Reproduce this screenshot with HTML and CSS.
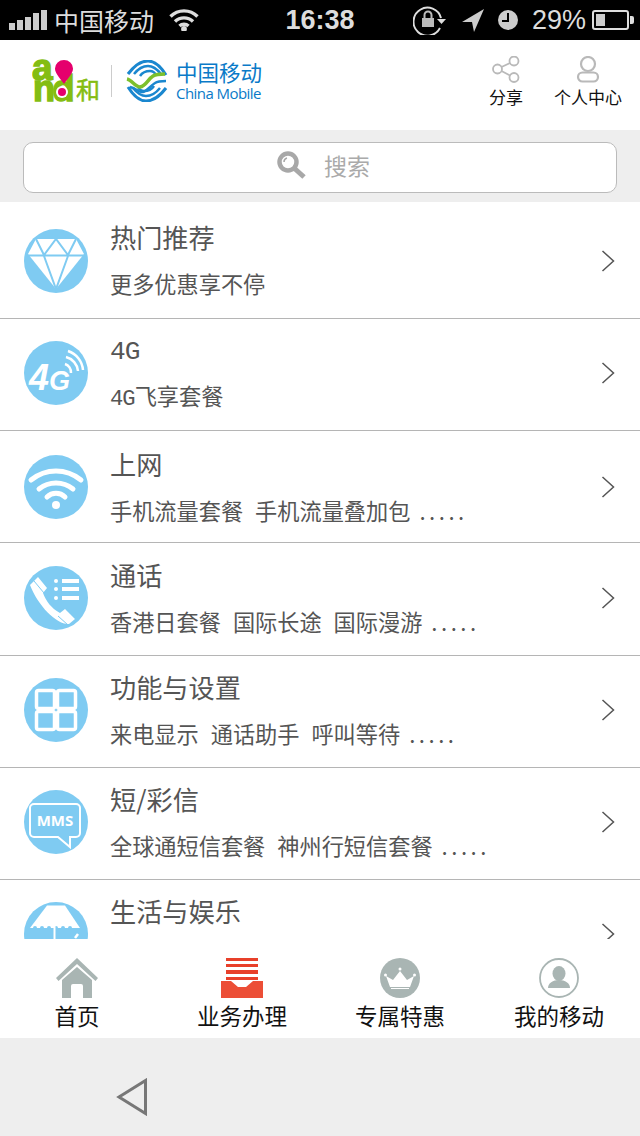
FILE: index.html
```html
<!DOCTYPE html>
<html lang="zh-CN">
<head>
    <meta charset="UTF-8">
    <meta name="viewport" content="width=device-width, initial-scale=1.0">
    <title>中国移动</title>
    <link rel="stylesheet" href="styles.css">
</head>
<body>
    <div class="phone">
        <!-- status bar -->
        <div class="status">
            <div class="status-left">
                <svg class="signal" width="38" height="20" viewBox="0 0 38 20">
                    <rect x="0" y="13" width="6" height="7"/>
                    <rect x="8" y="10" width="6" height="10"/>
                    <rect x="16" y="7" width="6" height="13"/>
                    <rect x="24" y="3" width="6" height="17"/>
                    <rect x="32" y="0" width="6" height="20"/>
                </svg>
                <span class="carrier">中国移动</span>
                <svg width="30" height="22" viewBox="0 0 30 22" fill="none" stroke="#ddd" stroke-width="3.4">
                    <path d="M1.500 7.500a19 19 0 0 1 27 0"/>
                    <path d="M6 12.500a13 13 0 0 1 18 0"/>
                    <path d="M10.500 17a6.500 6.500 0 0 1 9 0"/>
                    <circle cx="15" cy="20" r="1.200" fill="#ddd"/>
                </svg>
            </div>
            <div class="time">16:38</div>
            <div class="status-right">
                <svg width="34" height="30" viewBox="0 0 34 30" fill="none">
                    <path d="M27 23a14 14 0 1 1 1-10" stroke="#ddd" stroke-width="2"/>
                    <path d="M24 14h9l-4.500 5z" fill="#ddd"/>
                    <rect x="9" y="13" width="12" height="9" fill="#bbb"/>
                    <path d="M11.500 13v-3a3.500 3.500 0 0 1 7 0v3" stroke="#bbb" stroke-width="2"/>
                </svg>
                <svg class="arrow" width="22" height="23" viewBox="0 0 22 23"><path d="M22 0L0 13l10 0 2 10z" fill="#ccc"/></svg>
                <svg class="clock" width="20" height="20" viewBox="0 0 20 20">
                    <circle cx="10" cy="10" r="10" fill="#ccc"/>
                    <path d="M10 3v8H4" fill="none" stroke="#000" stroke-width="2"/>
                </svg>
                <span class="battery-text">29%</span>
                <svg width="42" height="20" viewBox="0 0 42 20">
                    <rect x="1" y="1" width="35" height="18" rx="2" fill="none" stroke="#ddd" stroke-width="2"/>
                    <rect x="4" y="4" width="9" height="12" fill="#ccc"/>
                    <path d="M38 6h2a2 2 0 0 1 2 2v4a2 2 0 0 1-2 2h-2z" fill="#ddd"/>
                </svg>
            </div>
        </div>

        <!-- top header with logos -->
        <header class="header">
            <div class="logos">
                <svg class="logo-and" width="68" height="70" viewBox="0 -14 68 70">
                    <g class="and-letters">
                        <text x="0" y="19.500" font-size="37">a</text>
                        <text x="1" y="41" font-size="36" letter-spacing="-2.500">nd</text>
                        <text x="44" y="39" font-size="24" class="and-he">和</text>
                    </g>
                    <path d="M32 24C27 17 23 13 23 8.500a9 8.500 0 0 1 18 0C41 13 37 17 32 24z" fill="#e5006d"/>
                    <circle cx="30" cy="32" r="6" fill="#fff"/>
                    <circle cx="30" cy="32" r="4" fill="#e5006d"/>
                </svg>
                <div class="logo-line"></div>
                <svg width="42" height="42" viewBox="0 0 42 42" fill="none">
                    <g stroke="#1a87cf">
                        <path d="M2 14C8 6 15 1 22 1 29 1 35 7 40 15" stroke-width="3"/>
                        <path d="M8 14C12 9 17 6 22 6 27 6 31 9 35 14" stroke-width="2.500"/>
                        <path d="M14 16C16 13 20 11 24 11 27 11 29 13 30 15" stroke-width="2.500"/>
                        <g transform="rotate(180 21 21)">
                            <path d="M2 14C8 6 15 1 22 1 29 1 35 7 40 15" stroke-width="3"/>
                            <path d="M8 14C12 9 17 6 22 6 27 6 31 9 35 14" stroke-width="2.500"/>
                            <path d="M14 16C16 13 20 11 24 11 27 11 29 13 30 15" stroke-width="2.500"/>
                        </g>
                    </g>
                    <path d="M1 19C6 20 9 27 14 27 20 26 22 19 27 16 30 14 34 14 39 14" stroke="#7cc02c" stroke-width="3.500"/>
                    <path d="M4 27C10 28 13 33 17 32 21 31 24 26 29 23 32 21 35 21 40 21" stroke="#1a87cf" stroke-width="2.500"/>
                </svg>
                <div class="logo-words">
                    <span class="logo-cn">中国移动</span>
                    <span class="logo-en">China Mobile</span>
                </div>
            </div>
            <div class="header-actions">
                <div class="action">
                    <svg width="28" height="27" viewBox="0 0 28 27" fill="none" stroke="#b9b9b9" stroke-width="1.800">
                        <circle cx="5.500" cy="13" r="4.500"/>
                        <circle cx="22" cy="5" r="4.500"/>
                        <circle cx="22" cy="21.500" r="4.500"/>
                        <path d="M9.500 11l8.500-4M9.500 15l8.500 4.500"/>
                    </svg>
                    <span>分享</span>
                </div>
                <div class="action">
                    <svg width="24" height="27" viewBox="0 0 24 27" fill="none" stroke="#b9b9b9" stroke-width="2.200">
                        <circle cx="12" cy="8" r="7"/>
                        <rect x="2" y="16.500" width="20" height="9" rx="4.500"/>
                    </svg>
                    <span>个人中心</span>
                </div>
            </div>
        </header>

        <!-- search -->
        <div class="search-band">
            <div class="search-box">
                <svg width="29" height="28" viewBox="0 0 29 28" fill="none">
                    <circle cx="11" cy="11" r="8.500" stroke="#a8a8a8" stroke-width="4.500"/>
                    <path d="M17 17l10 9" stroke="#a8a8a8" stroke-width="5"/>
                    <path d="M7 11a4 4 0 0 1 3-4" stroke="#a8a8a8" stroke-width="1.500"/>
                </svg>
                <span>搜索</span>
            </div>
        </div>

        <!-- category list -->
        <div class="list">
            <div class="row row-first">
                <svg class="row-icon" width="64" height="64" viewBox="0 0 64 64">
                    <circle cx="32" cy="32" r="32" fill="#7fcbf2"/>
                    <path d="M12 10H52L60 25 32 60 4 25z" fill="#fff"/>
                    <path d="M12 10l8 16 12-16 12 16 8-16M3 26.500H61M20 27l12 33 12-33" fill="none" stroke="#7fcbf2" stroke-width="2"/>
                </svg>
                <div class="row-text">
                    <div class="row-title">热门推荐</div>
                    <div class="row-sub">更多优惠享不停</div>
                </div>
                <svg class="chevron" width="14" height="22" viewBox="0 0 14 22"><path d="M1.500 1l11 10-11 10" fill="none" stroke="#555" stroke-width="1.500"/></svg>
            </div>
            <div class="row row-4g">
                <svg class="row-icon" width="64" height="64" viewBox="0 0 64 64">
                    <circle cx="32" cy="32" r="32" fill="#7fcbf2"/>
                    <text class="icon-4g" x="5" y="49" font-size="36">4<tspan font-size="27">G</tspan></text>
                    <path d="M41 23a9 9 0 0 1 6 9M42 16a16 16 0 0 1 12 14M44 10a22 22 0 0 1 15 19" fill="none" stroke="#fff" stroke-width="2.500"/>
                </svg>
                <div class="row-text">
                    <div class="row-title"><span class="mono">4G</span></div>
                    <div class="row-sub"><span class="mono">4G</span>飞享套餐</div>
                </div>
                <svg class="chevron" width="14" height="22" viewBox="0 0 14 22"><path d="M1.500 1l11 10-11 10" fill="none" stroke="#555" stroke-width="1.500"/></svg>
            </div>
            <div class="row row-net">
                <svg class="row-icon" width="64" height="64" viewBox="0 0 64 64">
                    <circle cx="32" cy="32" r="32" fill="#7fcbf2"/>
                    <g fill="none" stroke="#fff" stroke-width="5" stroke-linecap="round">
                        <path d="M7 25c15-12 35-12 50 0"/>
                        <path d="M15 34c10-8 24-8 34 0"/>
                        <path d="M23 42c5-5 13-5 18 0"/>
                    </g>
                    <circle cx="32" cy="50" r="4" fill="#fff"/>
                </svg>
                <div class="row-text">
                    <div class="row-title">上网</div>
                    <div class="row-sub">手机流量套餐&nbsp;&nbsp;手机流量叠加包<span class="dots">.....</span></div>
                </div>
                <svg class="chevron" width="14" height="22" viewBox="0 0 14 22"><path d="M1.500 1l11 10-11 10" fill="none" stroke="#555" stroke-width="1.500"/></svg>
            </div>
            <div class="row row-call">
                <svg class="row-icon" width="64" height="64" viewBox="0 0 64 64">
                    <circle cx="32" cy="32" r="32" fill="#7fcbf2"/>
                    <path d="M14 11l9 11-4 5c3 8 8 15 17 20l5-4 10 10-6 5C33 59 14 40 6 19z" fill="#fff"/>
                    <path d="M10 15l10 12M34 50l10 9" stroke="#7fcbf2" stroke-width="1"/>
                    <circle cx="32" cy="15" r="2" fill="#fff"/>
                    <circle cx="32" cy="23" r="2" fill="#fff"/>
                    <circle cx="32" cy="32" r="2" fill="#fff"/>
                    <path d="M38 13h17v4H38zM38 21h17v4H38zM38 30h17v4H38z" fill="#fff"/>
                </svg>
                <div class="row-text">
                    <div class="row-title">通话</div>
                    <div class="row-sub">香港日套餐&nbsp;&nbsp;国际长途&nbsp;&nbsp;国际漫游<span class="dots">.....</span></div>
                </div>
                <svg class="chevron" width="14" height="22" viewBox="0 0 14 22"><path d="M1.500 1l11 10-11 10" fill="none" stroke="#555" stroke-width="1.500"/></svg>
            </div>
            <div class="row">
                <svg class="row-icon" width="64" height="64" viewBox="0 0 64 64">
                    <circle cx="32" cy="32" r="32" fill="#7fcbf2"/>
                    <g fill="none" stroke="#fff" stroke-width="3.500">
                        <rect x="12.500" y="12.500" width="18" height="18" rx="2"/>
                        <rect x="33.500" y="12.500" width="18" height="18" rx="2"/>
                        <rect x="12.500" y="33.500" width="18" height="18" rx="2"/>
                        <rect x="33.500" y="33.500" width="18" height="18" rx="2"/>
                    </g>
                </svg>
                <div class="row-text">
                    <div class="row-title">功能与设置</div>
                    <div class="row-sub">来电显示&nbsp;&nbsp;通话助手&nbsp;&nbsp;呼叫等待<span class="dots">.....</span></div>
                </div>
                <svg class="chevron" width="14" height="22" viewBox="0 0 14 22"><path d="M1.500 1l11 10-11 10" fill="none" stroke="#555" stroke-width="1.500"/></svg>
            </div>
            <div class="row">
                <svg class="row-icon" width="64" height="64" viewBox="0 0 64 64">
                    <circle cx="32" cy="32" r="32" fill="#7fcbf2"/>
                    <path d="M10 14h42a4 4 0 0 1 4 4v25a4 4 0 0 1-4 4H46v10L34 47H10a4 4 0 0 1-4-4V18a4 4 0 0 1 4-4z" fill="none" stroke="#fff" stroke-width="2"/>
                    <text class="icon-mms" x="31" y="36" font-size="15" text-anchor="middle">MMS</text>
                </svg>
                <div class="row-text">
                    <div class="row-title">短/彩信</div>
                    <div class="row-sub">全球通短信套餐&nbsp;&nbsp;神州行短信套餐<span class="dots">.....</span></div>
                </div>
                <svg class="chevron" width="14" height="22" viewBox="0 0 14 22"><path d="M1.500 1l11 10-11 10" fill="none" stroke="#555" stroke-width="1.500"/></svg>
            </div>
            <div class="row">
                <svg class="row-icon" width="64" height="64" viewBox="0 0 64 64">
                    <circle cx="32" cy="32" r="32" fill="#7fcbf2"/>
                    <path d="M23 3.500H41L56 26H6z" fill="#fff"/>
                    <g fill="#7fcbf2">
                        <circle cx="11" cy="26" r="2"/>
                        <circle cx="18" cy="26" r="2"/>
                        <circle cx="25" cy="26" r="2"/>
                        <circle cx="32" cy="26" r="2"/>
                        <circle cx="39" cy="26" r="2"/>
                        <circle cx="46" cy="26" r="2"/>
                    </g>
                    <path d="M29.500 24h2v14h-2z" fill="#fff"/>
                    <path d="M51 36l3-4" stroke="#fff" stroke-width="2.500"/>
                </svg>
                <div class="row-text">
                    <div class="row-title">生活与娱乐</div>
                    <div class="row-sub">&nbsp;</div>
                </div>
                <svg class="chevron" width="14" height="22" viewBox="0 0 14 22"><path d="M1.500 1l11 10-11 10" fill="none" stroke="#555" stroke-width="1.500"/></svg>
            </div>
        </div>

        <!-- bottom tabs -->
        <nav class="tabs">
            <div class="tab">
                <svg width="42" height="40" viewBox="0 0 42 40">
                    <path d="M0 20L21 0l21 20-2.500 3L21 6 2.500 23z" fill="#a9b5b3"/>
                    <path d="M6 22L21 9l15 13v18H27V28a2 2 0 0 0-2-2h-8a2 2 0 0 0-2 2v12H6z" fill="#a9b5b3"/>
                </svg>
                <span>首页</span>
            </div>
            <div class="tab">
                <svg width="42" height="40" viewBox="0 0 42 40">
                    <path d="M5 0h32v3H5zM5 6h32v3H5zM5 12h32v4H5zM5 19h32v3H5z" fill="#e8402a"/>
                    <path d="M0 23h10l7 6h8l7-6h10v17H0z" fill="#ec4e36"/>
                </svg>
                <span>业务办理</span>
            </div>
            <div class="tab">
                <svg width="42" height="40" viewBox="0 0 42 40">
                    <circle cx="21" cy="20" r="20" fill="#a9b5b3"/>
                    <path d="M7 18l7 4 7-9 7 9 7-4-4 11H11z" fill="#fff"/>
                    <circle cx="21" cy="11" r="1.500" fill="#fff"/>
                    <circle cx="6.500" cy="17" r="1.500" fill="#fff"/>
                    <circle cx="35.500" cy="17" r="1.500" fill="#fff"/>
                    <path d="M12 30.500h18" stroke="#fff" stroke-width="1"/>
                </svg>
                <span>专属特惠</span>
            </div>
            <div class="tab">
                <svg width="42" height="40" viewBox="0 0 42 40">
                    <circle cx="21" cy="20" r="19" fill="none" stroke="#a9b5b3" stroke-width="1.800"/>
                    <ellipse cx="21" cy="15.500" rx="6.500" ry="7.500" fill="#a9b5b3"/>
                    <path d="M10 30c0-5 5-8 11-8s11 3 11 8z" fill="#a9b5b3"/>
                </svg>
                <span>我的移动</span>
            </div>
        </nav>

        <!-- android nav bar -->
        <div class="softkeys">
            <svg width="32" height="38" viewBox="0 0 32 38"><path d="M29.500 2.500v33L3 19z" fill="none" stroke="#777" stroke-width="3"/></svg>
        </div>
    </div>
</body>
</html>
```

FILE: styles.css
```css
* {
    box-sizing: border-box;
}

html, body {
    margin: 0;
    padding: 0;
}

body {
    font-family: "Noto Sans CJK SC", "Liberation Sans", sans-serif;
    background-color: #eeeeee;
}

.phone {
    width: 640px;
    height: 1136px;
    display: flex;
    flex-direction: column;
    overflow: hidden;
}

/* status bar */
.status {
    height: 40px;
    flex: none;
    background: #000;
    color: #ddd;
    display: grid;
    grid-template-columns: 1fr auto 1fr;
    align-items: center;
}

.status svg {
    display: block;
    flex: none;
}

.status-left {
    display: flex;
    align-items: center;
    padding-left: 9px;
}

.signal {
    fill: #ccc;
}

.carrier {
    font-size: 25px;
    line-height: 40px;
    margin: 0 15px 0 7px;
}

.time {
    font-family: "Liberation Sans", sans-serif;
    font-size: 27px;
    font-weight: 700;
    line-height: 40px;
    color: #ddd;
}

.status-right {
    display: flex;
    align-items: center;
    justify-content: flex-end;
    padding-right: 6px;
}

.arrow {
    margin-left: 15px;
}

.clock {
    margin-left: 14px;
}

.battery-text {
    font-family: "Liberation Sans", sans-serif;
    font-size: 27px;
    line-height: 40px;
    margin: 0 6px 0 14px;
}

/* header */
.header {
    height: 90px;
    flex: none;
    background: #fff;
    display: flex;
    align-items: center;
    justify-content: space-between;
    padding: 0 18px 0 32px;
}

.logos {
    display: flex;
    align-items: center;
    padding-bottom: 9px;
}

.logo-and {
    display: block;
}

.and-letters text {
    font-family: "Liberation Sans", sans-serif;
    font-weight: 700;
    fill: #84bd12;
    stroke: #84bd12;
    stroke-width: 1.500;
}

.and-letters .and-he {
    font-family: "Noto Sans CJK SC", sans-serif;
    font-weight: 400;
    stroke-width: 0.500;
}

.logo-line {
    width: 1px;
    height: 32px;
    background: #ccc;
    margin: 0 14px 0 11px;
}

.logo-words {
    display: flex;
    flex-direction: column;
    margin-left: 8px;
    color: #0a7ac8;
}

.logo-cn {
    font-size: 21.500px;
    line-height: 24px;
}

.logo-en {
    font-family: "Open Sans", sans-serif;
    font-size: 15px;
    line-height: 18px;
    letter-spacing: -0.550px;
}

.header-actions {
    display: flex;
    gap: 31px;
    padding-bottom: 6px;
}

.action {
    display: flex;
    flex-direction: column;
    align-items: center;
    color: #111;
    font-size: 17px;
    line-height: 24px;
}

.action span {
    margin-top: 2px;
}

/* search */
.search-band {
    height: 72px;
    flex: none;
    background: #eeeeee;
    padding: 12px 23px 9px;
}

.search-box {
    height: 51px;
    background: #fff;
    border: 1px solid #bbb;
    border-radius: 10px;
    display: flex;
    align-items: center;
    justify-content: center;
    gap: 18px;
    padding: 0 0 5px 7px;
    color: #aaa;
    font-size: 23px;
}

/* list */
.list {
    height: 737px;
    flex: none;
    background: #fff;
    overflow: hidden;
}

.row {
    height: 112px;
    display: flex;
    align-items: center;
    padding: 0 25px 4px 24px;
    border-bottom: 1px solid #b5b5b5;
}

.row-first {
    height: 117px;
    padding-top: 2px;
    padding-bottom: 0;
}

.row-net {
    padding-bottom: 0;
}

.row-call {
    height: 113px;
    padding-bottom: 3px;
}

.row:last-child {
    border-bottom: none;
}

.row-icon {
    display: block;
    flex: none;
}

.row-text {
    flex: 1;
    margin-left: 22px;
    padding-bottom: 2px;
    color: #555;
}

.row-first .row-text {
    padding-bottom: 4px;
}

.row-4g .row-text {
    padding-top: 3px;
}

.row-title {
    font-size: 26.200px;
    line-height: 36px;
    margin-bottom: 12px;
}

.row-4g .row-title {
    margin-bottom: 9px;
}

.row-sub {
    font-size: 22.200px;
    line-height: 32px;
    word-spacing: 1px;
    white-space: nowrap;
}

/* the 4G text is in a narrow fixed-width face */
.mono {
    font-family: "Liberation Mono", monospace;
    letter-spacing: -1px;
}

.dots {
    margin-left: 9px;
    letter-spacing: 3.500px;
}

.chevron {
    flex: none;
}

.icon-4g {
    font-family: "Liberation Sans", sans-serif;
    font-style: italic;
    font-weight: 700;
    fill: #fff;
}

.icon-mms {
    font-family: "Open Sans", sans-serif;
    font-weight: 700;
    fill: #fff;
}

/* bottom tabs */
.tabs {
    height: 99px;
    flex: none;
    background: #fff;
    display: grid;
    grid-template-columns: 154px 176px 140px 170px;
    padding-top: 19px;
}

.tab {
    display: flex;
    flex-direction: column;
    align-items: center;
    color: #111;
    font-size: 22.500px;
    line-height: 34px;
    white-space: nowrap;
}

.tab svg {
    display: block;
    flex: none;
}

.tab:last-child {
    padding-left: 8px;
}

/* soft keys */
.softkeys {
    flex: 1;
    background: #eeeeee;
    padding: 40px 0 0 116px;
}

.softkeys svg {
    display: block;
}
```
